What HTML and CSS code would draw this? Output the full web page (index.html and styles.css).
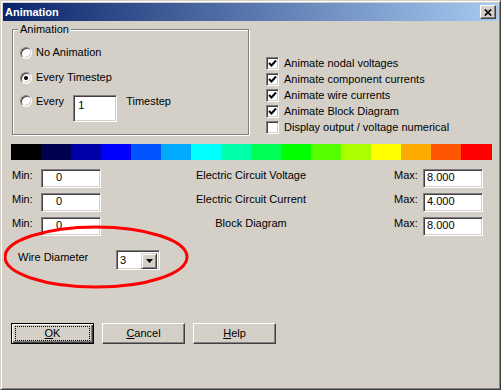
FILE: index.html
```html
<!DOCTYPE html>
<html lang="en">
<head>
  <meta charset="UTF-8" />
  <meta name="viewport" content="width=device-width, initial-scale=1.0" />
  <title>Animation</title>
  <link rel="stylesheet" href="styles.css">
</head>
<body>
  <div class="window">
    <div class="titlebar">
      <span>Animation</span>
      <span class="close">
        <svg width="8" height="7" viewBox="0 0 8 7"><path d="M0.8 0.5 L7.2 6.5 M7.2 0.5 L0.8 6.5" stroke="#000" stroke-width="1.7" fill="none"/></svg>
      </span>
    </div>

    <div class="content">
      <div class="top">
        <fieldset class="group">
          <legend>Animation</legend>
          <div class="opt"><span class="radio"></span>No Animation</div>
          <div class="opt"><span class="radio on"></span>Every Timestep</div>
          <div class="opt every"><span class="radio"></span>Every<span class="edit big">1</span>Timestep</div>
        </fieldset>

        <div class="checks">
          <div class="chk"><span class="box"><svg width="9" height="9" viewBox="0 0 9 9"><path d="M1 4 L3.5 6.5 L8 1.5" stroke="#000" stroke-width="2" fill="none"/></svg></span>Animate nodal voltages</div>
          <div class="chk"><span class="box"><svg width="9" height="9" viewBox="0 0 9 9"><path d="M1 4 L3.5 6.5 L8 1.5" stroke="#000" stroke-width="2" fill="none"/></svg></span>Animate component currents</div>
          <div class="chk"><span class="box"><svg width="9" height="9" viewBox="0 0 9 9"><path d="M1 4 L3.5 6.5 L8 1.5" stroke="#000" stroke-width="2" fill="none"/></svg></span>Animate wire currents</div>
          <div class="chk"><span class="box"><svg width="9" height="9" viewBox="0 0 9 9"><path d="M1 4 L3.5 6.5 L8 1.5" stroke="#000" stroke-width="2" fill="none"/></svg></span>Animate Block Diagram</div>
          <div class="chk"><span class="box"></span>Display output / voltage numerical</div>
        </div>
      </div>

      <div class="colorbar">
        <span class="c1"></span><span class="c2"></span><span class="c3"></span><span class="c4"></span>
        <span class="c5"></span><span class="c6"></span><span class="c7"></span><span class="c8"></span>
        <span class="c9"></span><span class="c10"></span><span class="c11"></span><span class="c12"></span>
        <span class="c13"></span><span class="c14"></span><span class="c15"></span><span class="c16"></span>
      </div>

      <div class="ranges">
        <span class="lbl">Min:</span><span class="edit min">0</span>
        <span class="name">Electric Circuit Voltage</span>
        <span class="lbl">Max:</span><span class="edit max">8.000</span>

        <span class="lbl">Min:</span><span class="edit min">0</span>
        <span class="name">Electric Circuit Current</span>
        <span class="lbl">Max:</span><span class="edit max">4.000</span>

        <span class="lbl">Min:</span><span class="edit min">0</span>
        <span class="name">Block Diagram</span>
        <span class="lbl">Max:</span><span class="edit max">8.000</span>
      </div>

      <div class="wire">
        <span class="wire-lbl">Wire Diameter</span>
        <span class="combo">
          <span class="combo-val">3</span>
          <span class="combo-btn"><svg width="7" height="4" viewBox="0 0 7 4"><path d="M0 0 H7 L3.5 4 Z" fill="#000"/></svg></span>
        </span>
      </div>

      <div class="buttons">
        <button class="btn default"><u>O</u>K</button>
        <button class="btn"><u>C</u>ancel</button>
        <button class="btn"><u>H</u>elp</button>
      </div>
    </div>

    <!-- red marker drawn over the dialog -->
    <svg class="mark" width="190" height="68" viewBox="0 0 190 68">
      <ellipse cx="92" cy="32" rx="91" ry="30" fill="none" stroke="#f00" stroke-width="3"/>
    </svg>
  </div>
</body>
</html>
```

FILE: styles.css
```css
* { box-sizing: border-box; margin: 0; padding: 0; }
body {
  background: #d4d0c8;
  font-family: "Liberation Sans", Arial, sans-serif;
  font-size: 11px;
  line-height: 13px;
  color: #000;
}
.window {
  position: relative;
  width: 501px;
  height: 390px;
  background: #d4d0c8;
  border: 1px solid;
  border-color: #d4d0c8 #404040 #404040 #d4d0c8;
  box-shadow: inset 1px 1px #fff, inset -1px -1px #808080;
  padding: 2px;
}
.titlebar {
  height: 18px;
  display: flex;
  align-items: center;
  justify-content: space-between;
  padding: 0 2px;
  background: linear-gradient(to right, #0a246a, #a6caf0);
  color: #fff;
  font-weight: bold;
}
.close {
  width: 16px;
  height: 14px;
  display: flex;
  align-items: center;
  justify-content: center;
  background: #d4d0c8;
  border: 1px solid;
  border-color: #fff #404040 #404040 #fff;
  box-shadow: inset -1px -1px #808080;
}
.content { padding: 2px 0 0 8px; }
.top { display: flex; }

.group {
  margin-left: 1px;
  width: 237px;
  height: 112px;
  border: 1px solid #808080;
  box-shadow: 1px 1px #fff, inset 1px 1px #fff;
  padding: 0 0 0 7px;
}
.group legend {
  margin-left: -2px;
  padding: 0 2px;
  line-height: 13px;
  background: #d4d0c8;
}
.opt {
  display: flex;
  align-items: center;
  height: 25px;
}
.opt:first-of-type { margin-top: 4px; }
.opt.every {
  margin-top: 5px;
  align-items: flex-start;
}
.radio {
  position: relative;
  width: 12px;
  height: 12px;
  margin-right: 4px;
  border-radius: 50%;
  background: #fff;
  border: 1px solid;
  border-color: #808080 #fff #fff #808080;
  box-shadow: inset 1px 1px #404040, inset -1px -1px #d4d0c8;
}
.radio.on::after {
  content: "";
  position: absolute;
  left: 3px;
  top: 3px;
  width: 4px;
  height: 4px;
  border-radius: 50%;
  background: #000;
}
.edit {
  display: block;
  background: #fff;
  border: 1px solid;
  border-color: #808080 #fff #fff #808080;
  box-shadow: inset 1px 1px #404040, inset -1px -1px #d4d0c8;
}
.edit.big {
  width: 44px;
  height: 27px;
  margin: 0 9px;
  padding: 3px 4px;
}

.checks {
  margin-left: 17px;
  padding-top: 32px;
}
.chk {
  display: flex;
  align-items: center;
  height: 16px;
}
.box {
  width: 13px;
  height: 13px;
  margin-right: 5px;
  display: flex;
  align-items: center;
  justify-content: center;
  background: #fff;
  border: 1px solid;
  border-color: #808080 #fff #fff #808080;
  box-shadow: inset 1px 1px #404040, inset -1px -1px #d4d0c8;
}

.colorbar {
  margin-top: 9px;
  height: 16px;
  display: grid;
  grid-template-columns: repeat(15, 30px) 31px;
  width: 481px;
}
.c1 { background: #000000; }
.c2 { background: #000050; }
.c3 { background: #0000aa; }
.c4 { background: #0000ff; }
.c5 { background: #0055ff; }
.c6 { background: #00aaff; }
.c7 { background: #00ffff; }
.c8 { background: #00ffaa; }
.c9 { background: #00ff55; }
.c10 { background: #00ff00; }
.c11 { background: #55ff00; }
.c12 { background: #aaff00; }
.c13 { background: #ffff00; }
.c14 { background: #ffaa00; }
.c15 { background: #ff5500; }
.c16 { background: #ff0000; }

.ranges {
  margin-top: 9px;
  width: 472px;
  display: grid;
  grid-template-columns: 30px 60px 1fr 30px 60px;
  grid-auto-rows: 19px;
  row-gap: 5px;
}
.ranges .lbl { padding-left: 1px; }
.ranges .name {
  text-align: center;
  padding-left: 8px;
}
.edit.min { padding-left: 14px; }
.edit.max { padding-left: 3px; }
.ranges .edit { padding-top: 1px; }

.wire {
  margin-top: 14px;
  display: flex;
  align-items: flex-start;
  height: 20px;
}
.wire-lbl {
  width: 105px;
  padding-left: 7px;
  margin-top: 1px;
}
.combo {
  width: 44px;
  height: 20px;
  display: flex;
  justify-content: space-between;
  padding: 2px 2px 2px 3px;
  background: #fff;
  border: 1px solid;
  border-color: #808080 #fff #fff #808080;
  box-shadow: inset 1px 1px #404040, inset -1px -1px #d4d0c8;
}
.combo-val { padding-top: 1px; }
.combo-btn {
  width: 16px;
  height: 16px;
  display: flex;
  align-items: center;
  justify-content: center;
  background: #d4d0c8;
  border: 1px solid;
  border-color: #d4d0c8 #404040 #404040 #d4d0c8;
  box-shadow: inset 1px 1px #fff, inset -1px -1px #808080;
}

.buttons {
  margin-top: 53px;
  display: flex;
  gap: 8px;
}
.btn {
  position: relative;
  width: 83px;
  height: 21px;
  font: inherit;
  color: #000;
  background: #d4d0c8;
  border: 1px solid;
  border-color: #fff #404040 #404040 #fff;
  box-shadow: inset -1px -1px #808080;
}
.btn.default {
  border-color: #000;
  box-shadow: inset 1px 1px #fff, inset -1px -1px #404040, inset -2px -2px #808080;
}
.btn.default::after {
  content: "";
  position: absolute;
  left: 3px;
  right: 3px;
  top: 2px;
  bottom: 2px;
  border: 1px dotted #000;
}

.mark {
  position: absolute;
  left: 3px;
  top: 224px;
  pointer-events: none;
}
```
